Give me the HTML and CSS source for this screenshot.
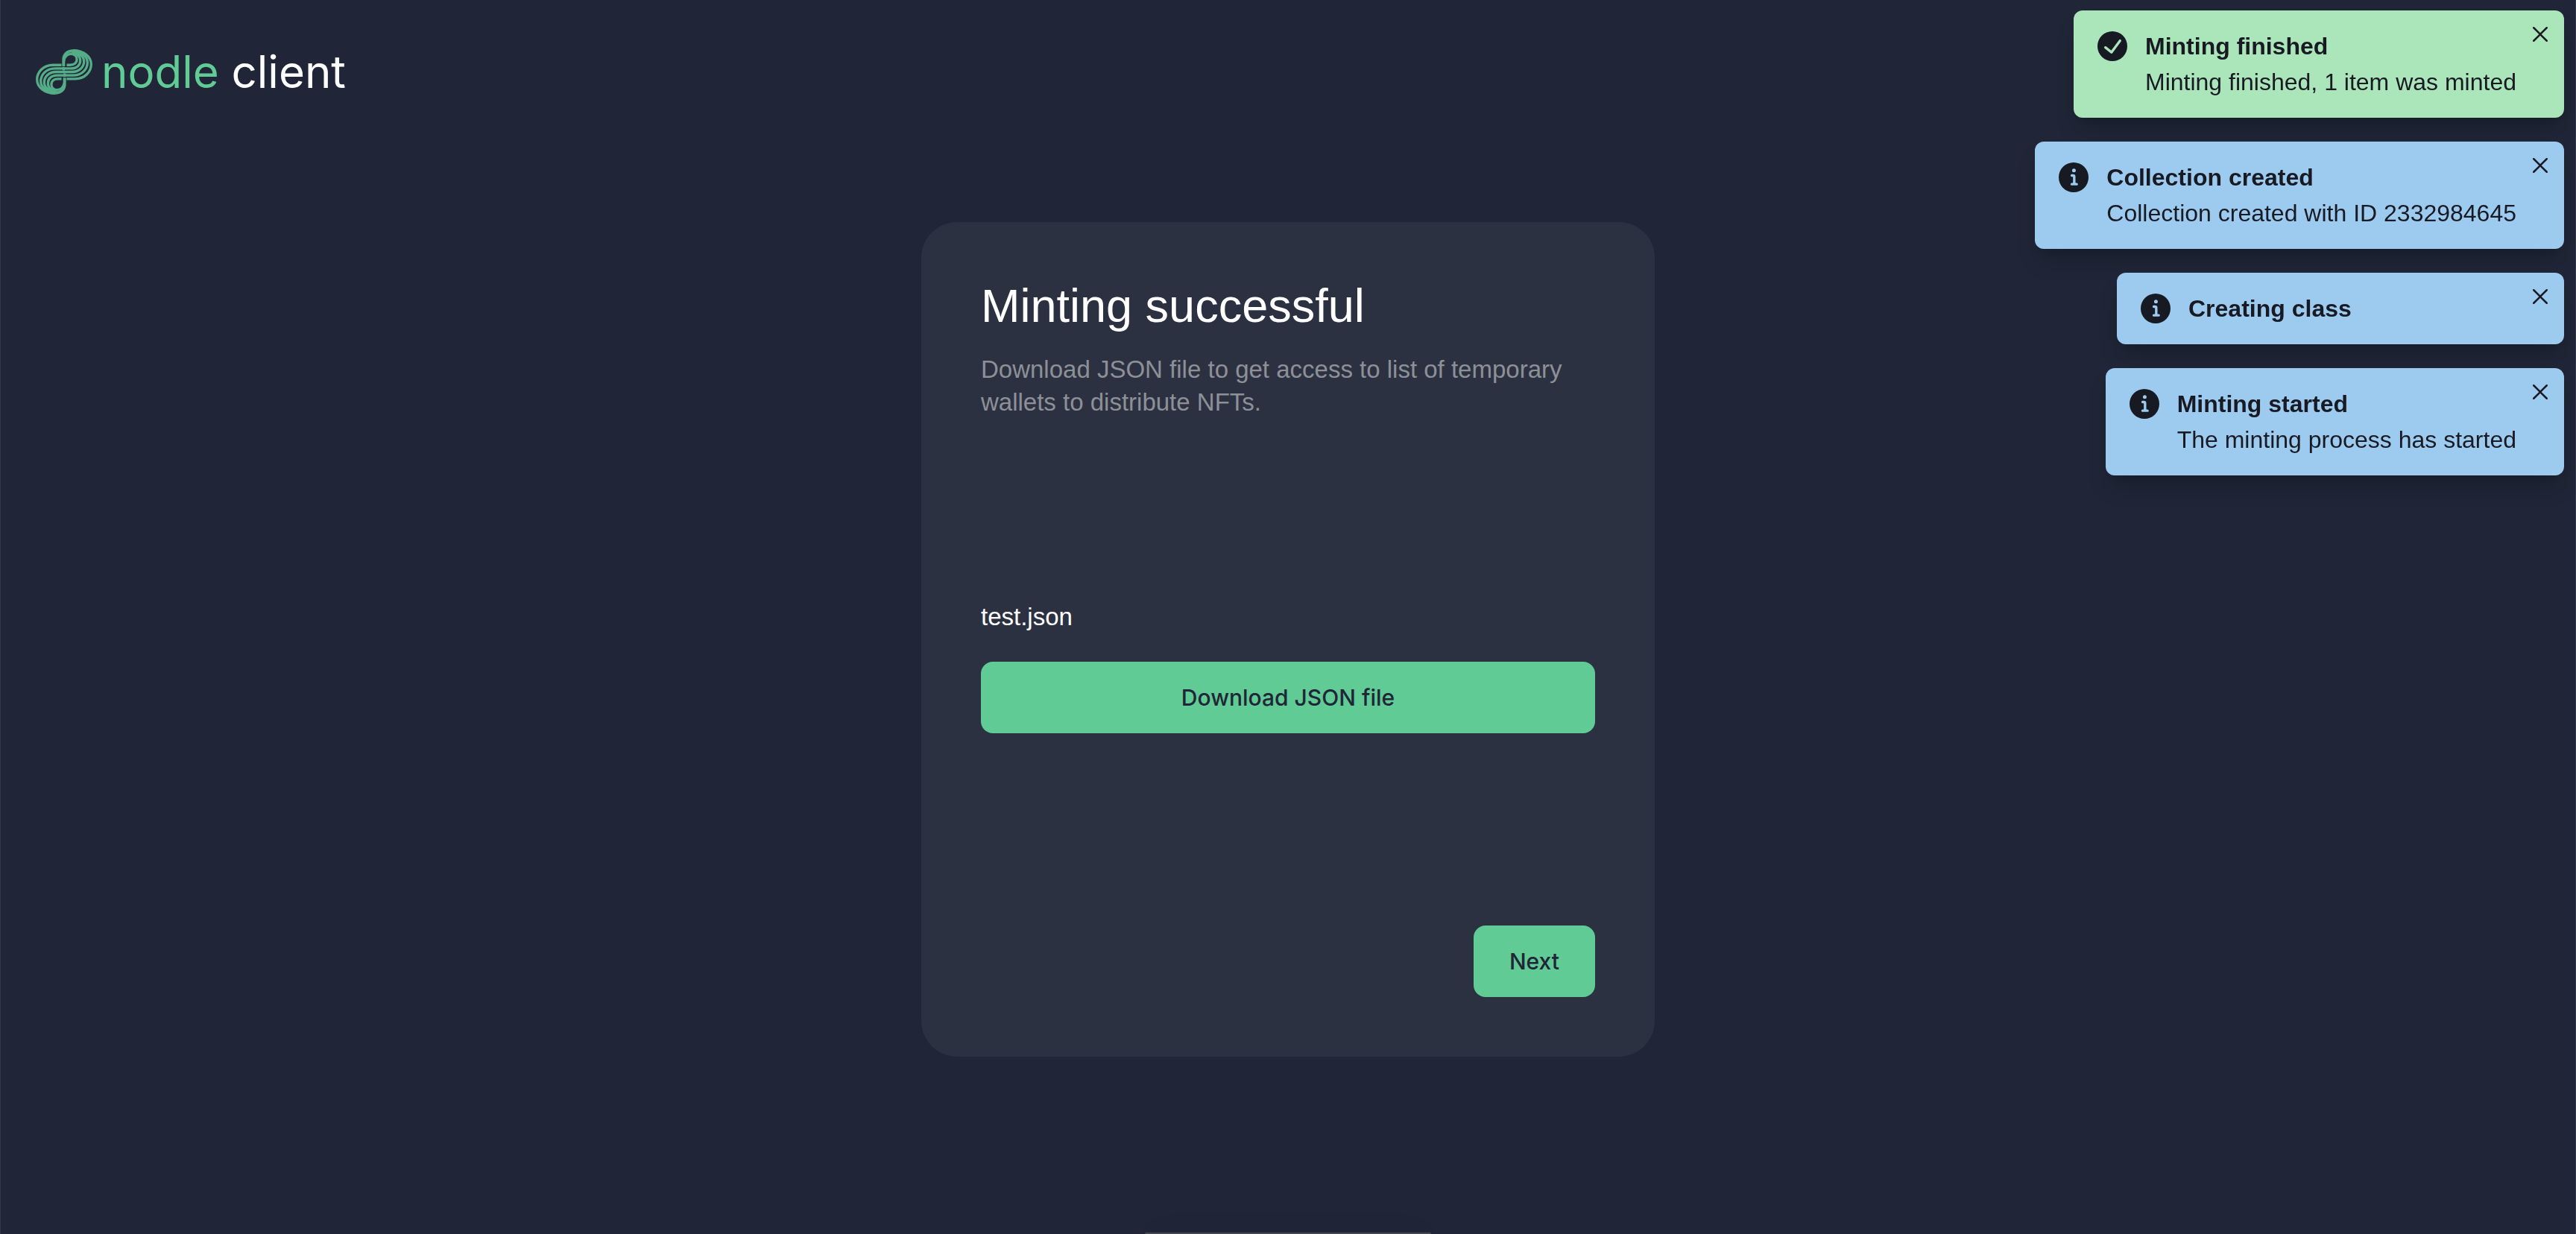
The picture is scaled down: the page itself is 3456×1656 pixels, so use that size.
FILE: index.html
```html
<!DOCTYPE html>
<html lang="en">
<head>
<meta charset="utf-8">
<meta name="viewport" content="width=device-width, initial-scale=1">
<title>nodle client</title>
<link rel="stylesheet" href="styles.css">
</head>
<body>
<svg class="defs" aria-hidden="true">
  <symbol id="icon-info" viewBox="0 0 24 24">
    <path fill="currentColor" d="M12,0A12,12,0,1,0,24,12,12.013,12.013,0,0,0,12,0Zm.25,5a1.5,1.5,0,1,1-1.5,1.5A1.5,1.5,0,0,1,12.25,5ZM14.5,18.5h-4a1,1,0,0,1,0-2h.75a.25.25,0,0,0,.25-.25v-4.5a.25.25,0,0,0-.25-.25H10.5a1,1,0,0,1,0-2h1a2,2,0,0,1,2,2v4.75a.25.25,0,0,0,.25.25h.75a1,1,0,1,1,0,2Z"/>
  </symbol>
  <symbol id="icon-check" viewBox="0 0 24 24">
    <path fill="currentColor" d="M12,0A12,12,0,1,0,24,12,12.014,12.014,0,0,0,12,0Zm6.927,8.2-6.845,9.289a1.011,1.011,0,0,1-1.43.188L5.764,13.769a1,1,0,1,1,1.25-1.562l4.076,3.261,6.227-8.451A1,1,0,1,1,18.927,8.2Z"/>
  </symbol>
  <symbol id="icon-close" viewBox="0 0 24 24">
    <path fill="currentColor" d="M.439,21.44a1.5,1.5,0,0,0,2.122,2.121L11.823,14.3a.25.25,0,0,1,.354,0l9.262,9.263a1.5,1.5,0,1,0,2.122-2.121L14.3,12.177a.25.25,0,0,1,0-.354l9.263-9.262A1.5,1.5,0,0,0,21.439.44L12.177,9.7a.25.25,0,0,1-.354,0L2.561.44A1.5,1.5,0,0,0,.439,2.561L9.7,11.823a.25.25,0,0,1,0,.354Z"/>
  </symbol>
</svg>

<header class="header">
  <a class="brand" href="#">
    <svg class="brand-mark" viewBox="53 45 229 184" aria-hidden="true">
      <g id="lobe" fill="none" stroke="currentColor" stroke-width="10">
        <path stroke-width="12" d="M165.500 114V86C166 66 180 52 205 52"/>
        <path d="M178 109H192C208 109 219 101 219 86C219 73 209 64 196 64C181 64 169 75 167 92"/>
        <path d="M166 123H196C220 123 233 108 233 91C233 76 222 61 198 60"/>
        <path d="M166 137H200C231 137 248 115 248 95C248 76 230 58 200 57"/>
        <path d="M166 151H204C242 151 262 124 262 99C262 75 238 54 202 54"/>
        <path d="M178 165H212C254 165 277 134 277 106C277 75 246 50 204 50"/>
        <path d="M165.500 117V131"/>
      </g>
      <use href="#lobe" transform="rotate(180 167.500 137)"/>
    </svg>
    <span class="brand-name"><span class="brand-accent">nodle</span> client</span>
  </a>
</header>

<main class="main">
  <section class="card">
    <h1 class="card-title">Minting successful</h1>
    <p class="card-text">Download JSON file to get access to list of temporary wallets to distribute NFTs.</p>
    <div class="download">
      <p class="file-name">test.json</p>
      <button class="button" type="button">Download JSON file</button>
    </div>
    <div class="actions">
      <button class="button" type="button">Next</button>
    </div>
  </section>
</main>

<div class="toasts" role="status">
  <div class="toast toast-success">
    <svg class="toast-icon" aria-hidden="true"><use href="#icon-check"/></svg>
    <div><p class="toast-title">Minting finished</p><p class="toast-text">Minting finished, 1 item was minted</p></div>
    <button class="toast-close" type="button" aria-label="Close"><svg aria-hidden="true"><use href="#icon-close"/></svg></button>
  </div>
  <div class="toast">
    <svg class="toast-icon" aria-hidden="true"><use href="#icon-info"/></svg>
    <div><p class="toast-title">Collection created</p><p class="toast-text">Collection created with ID 2332984645</p></div>
    <button class="toast-close" type="button" aria-label="Close"><svg aria-hidden="true"><use href="#icon-close"/></svg></button>
  </div>
  <div class="toast">
    <svg class="toast-icon" aria-hidden="true"><use href="#icon-info"/></svg>
    <div><p class="toast-title">Creating class</p></div>
    <button class="toast-close" type="button" aria-label="Close"><svg aria-hidden="true"><use href="#icon-close"/></svg></button>
  </div>
  <div class="toast">
    <svg class="toast-icon" aria-hidden="true"><use href="#icon-info"/></svg>
    <div><p class="toast-title">Minting started</p><p class="toast-text">The minting process has started</p></div>
    <button class="toast-close" type="button" aria-label="Close"><svg aria-hidden="true"><use href="#icon-close"/></svg></button>
  </div>
</div>
<div class="bottom-bar"></div>
</body>
</html>
```
FILE: styles.css
```css
* { box-sizing: border-box; margin: 0; }

body {
  min-height: 100vh;
  background: #202637;
  box-shadow: inset 1px 0 #31384b, inset -1px 0 #31384b;
  color: #fff;
  font-family: "Liberation Sans", Arial, sans-serif;
  font-size: 32px;
}

.defs { position: absolute; width: 0; height: 0; }

.header { padding: 56px 48px 0; }

.brand {
  display: inline-flex;
  align-items: center;
  gap: 12px;
  height: 80px;
  color: #fff;
  text-decoration: none;
}
.brand-mark { width: 76px; height: 61px; color: #54ad86; }
.brand-name {
  font-family: Inter, "Liberation Sans", sans-serif;
  font-size: 60px;
  line-height: 80px;
}
.brand-accent { color: #60cb95; }

.main { display: flex; justify-content: center; padding: 162px 32px 32px; }

.card {
  display: flex;
  flex-direction: column;
  width: 100%;
  max-width: 984px;
  min-height: 1120px;
  padding: 80px;
  border-radius: 48px;
  background: #2c3142;
}
.card-title { font-size: 63px; font-weight: 400; line-height: 64px; }
.card-text {
  margin-top: 32px;
  color: #8d9096;
  font-size: 33px;
  line-height: 44px;
}
.download {
  display: flex;
  flex-direction: column;
  gap: 38px;
  margin: auto 0;
  padding-bottom: 14px;
}
.file-name { font-size: 33px; line-height: 44px; }
.actions { display: flex; justify-content: flex-end; }

.button {
  height: 96px;
  padding: 0 48px;
  border: 0;
  border-radius: 16px;
  background: #60cb95;
  color: #202637;
  font-family: Inter, "Liberation Sans", sans-serif;
  font-size: 30px;
  font-weight: 500;
}

.toasts {
  position: fixed;
  top: 14px;
  right: 16px;
  display: flex;
  flex-direction: column;
  align-items: flex-end;
  gap: 32px;
}
.toast {
  position: relative;
  display: flex;
  gap: 24px;
  min-width: 600px;
  padding: 24px 64px 24px 32px;
  border-radius: 12px;
  background: #9dcaef;
  color: #181a23;
  line-height: 48px;
  box-shadow: 0 20px 30px -6px rgb(0 0 0 / 20%), 0 8px 12px -4px rgb(0 0 0 / 10%);
}
.toast-success { background: #abe5ba; }
.toast-icon { width: 40px; height: 48px; flex: none; }
.toast-title { font-weight: 700; }
.toast-close {
  position: absolute;
  top: 8px;
  right: 8px;
  display: grid;
  place-items: center;
  width: 48px;
  height: 48px;
  padding: 0;
  border: 0;
  background: none;
  color: inherit;
}
.toast-close svg { width: 20px; height: 20px; }

.bottom-bar {
  position: fixed;
  bottom: 0;
  left: 50%;
  width: 384px;
  height: 2px;
  transform: translateX(-50%);
  border-radius: 8px 8px 0 0;
  background: #454751;
  box-shadow: 0 0 40px rgb(0 0 0 / 20%);
}
```
